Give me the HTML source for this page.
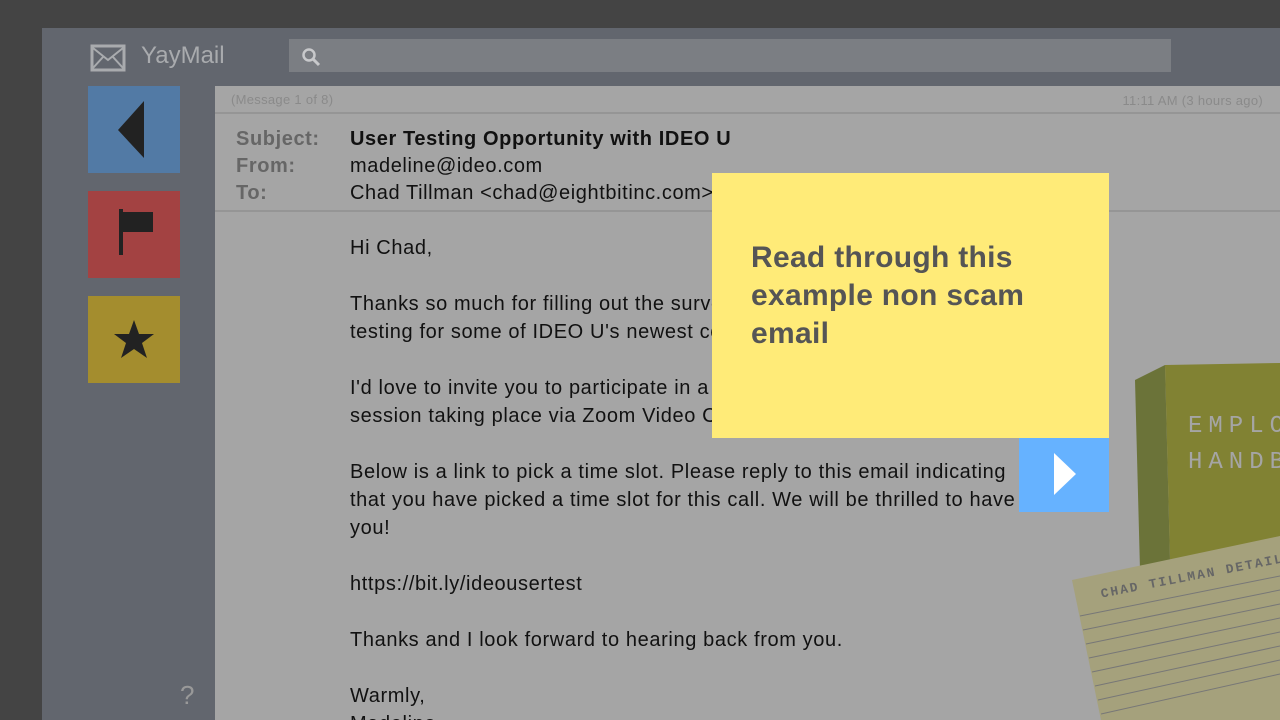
<!DOCTYPE html>
<html><head><meta charset="utf-8"><style>
*{margin:0;padding:0;box-sizing:border-box}
html,body{width:1280px;height:720px;overflow:hidden}
body{background:#444;font-family:"Liberation Sans",sans-serif;position:relative}
.app{position:absolute;left:42px;top:28px;width:1238px;height:692px;background:#62666e}
.logo{position:absolute;left:90px;top:42px;color:#a9abae;font-size:24px}
.search{position:absolute;left:289px;top:39px;width:882px;height:33px;background:#7b7e83}
.btn{position:absolute;left:88px;width:92px;height:87px}
.panel{position:absolute;left:215px;top:86px;width:1065px;height:634px;background:#a5a5a5;overflow:hidden}
.meta{position:absolute;top:0;left:0;right:0;height:28px;border-bottom:2px solid #959595;font-size:13px;color:#8a8a8a;letter-spacing:.3px}
.hdr{position:absolute;top:28px;left:0;right:0;height:98px;border-bottom:2px solid #959595;font-size:20px;letter-spacing:.6px}
.lab{position:absolute;left:21px;color:#666;font-weight:bold}
.val{position:absolute;left:135px;color:#111}
.body{position:absolute;left:135px;top:148px;font-size:20px;line-height:28px;color:#111;letter-spacing:.62px;white-space:nowrap}
.note{position:absolute;left:712px;top:173px;width:397px;height:265px;background:#ffeb78;color:#555;font-size:30px;font-weight:bold;padding:66px 39px;line-height:38px;letter-spacing:.3px}
.next{position:absolute;left:1019px;top:438px;width:90px;height:74px;background:#66b2ff}
</style></head><body>
<div class="app"></div>
<svg style="position:absolute;left:90px;top:44px" width="36" height="28" viewBox="0 0 36 28"><rect x="2" y="2" width="32" height="24" fill="none" stroke="#a9abae" stroke-width="3"/><path d="M3 4 L18 16 L33 4 M3 24 L13 13 M33 24 L23 13" fill="none" stroke="#a9abae" stroke-width="2"/></svg>
<div class="logo" style="left:141px">YayMail</div>
<div class="search"><svg style="position:absolute;left:12px;top:8px" width="20" height="20"><circle cx="8" cy="8" r="5.5" fill="none" stroke="#c8c9cb" stroke-width="2.5"/><path d="M12 12 L18 18" stroke="#c8c9cb" stroke-width="3"/></svg></div>
<div class="btn" style="top:86px;background:#527aa5"><svg style="position:absolute;left:24px;top:15px" width="36" height="58"><path d="M32 0 V57 L6 29 Z" fill="#222"/></svg></div>
<div class="btn" style="top:191px;background:#a34242"><svg style="position:absolute;left:28px;top:18px" width="40" height="50"><rect x="3" y="0" width="4" height="46" fill="#222"/><rect x="5" y="3" width="32" height="20" fill="#222"/></svg></div>
<div class="btn" style="top:296px;background:#a48d2e"><svg style="position:absolute;left:24px;top:22px" width="44" height="44"><path d="M22 2 L27 16 L42 16 L30 25 L35 40 L22 31 L9 40 L14 25 L2 16 L17 16 Z" fill="#222"/></svg></div>
<div style="position:absolute;left:180px;top:680px;color:#999;font-size:26px">?</div>
<div class="panel">
<div class="meta"><span style="position:absolute;left:16px;top:6px">(Message 1 of 8)</span><span style="position:absolute;right:17px;top:7px">11:11 AM (3 hours ago)</span></div>
<div class="hdr">
<div class="lab" style="top:14px">Subject:</div><div class="val" style="top:14px;font-weight:bold">User Testing Opportunity with IDEO U</div>
<div class="lab" style="top:41px">From:</div><div class="val" style="top:41px">madeline@ideo.com</div>
<div class="lab" style="top:68px">To:</div><div class="val" style="top:68px">Chad Tillman &lt;chad@eightbitinc.com&gt;</div>
</div>
<div class="body">Hi Chad,<br><br>Thanks so much for filling out the survey about user<br>testing for some of IDEO U's newest courses.<br><br>I'd love to invite you to participate in a user testing<br>session taking place via Zoom Video Conferencing.<br><br>Below is a link to pick a time slot. Please reply to this email indicating<br>that you have picked a time slot for this call. We will be thrilled to have<br>you!<br><br>https://bit.ly/ideousertest<br><br>Thanks and I look forward to hearing back from you.<br><br>Warmly,<br>Madeline</div>
</div>
<svg style="position:absolute;left:1060px;top:360px" width="220" height="360">
<path d="M75 20 L105 5 L110 200 L80 210 Z" fill="#6b7339"/>
<path d="M105 5 L220 3 L220 200 L110 200 Z" fill="#818233"/>
<text x="128" y="72" font-family="Liberation Mono,monospace" font-size="24" fill="#a5a5a5" letter-spacing="6">EMPLO</text>
<text x="128" y="108" font-family="Liberation Mono,monospace" font-size="24" fill="#a5a5a5" letter-spacing="6">HANDB</text>
<path d="M12 220 L220 176 L220 360 L41 360 Z" fill="#a5a17c"/>
<g transform="rotate(-11 40 240)"><text x="42" y="238" font-family="Liberation Mono,monospace" font-size="13" font-weight="bold" fill="#666" letter-spacing="2">CHAD TILLMAN DETAILS</text></g>
<g stroke="#777" stroke-width="1">
<line x1="20" y1="256" x2="220" y2="216"/><line x1="23" y1="270" x2="220" y2="230"/><line x1="26" y1="284" x2="220" y2="244"/><line x1="29" y1="298" x2="220" y2="258"/><line x1="32" y1="312" x2="220" y2="272"/><line x1="35" y1="326" x2="220" y2="286"/><line x1="38" y1="340" x2="220" y2="300"/><line x1="41" y1="354" x2="220" y2="314"/>
</g></svg>
<div class="note">Read through this example non scam email</div>
<div class="next"><svg style="position:absolute;left:35px;top:15px" width="24" height="44"><path d="M0 0 L22 21 L0 42 Z" fill="#fff"/></svg></div>
</body></html>
